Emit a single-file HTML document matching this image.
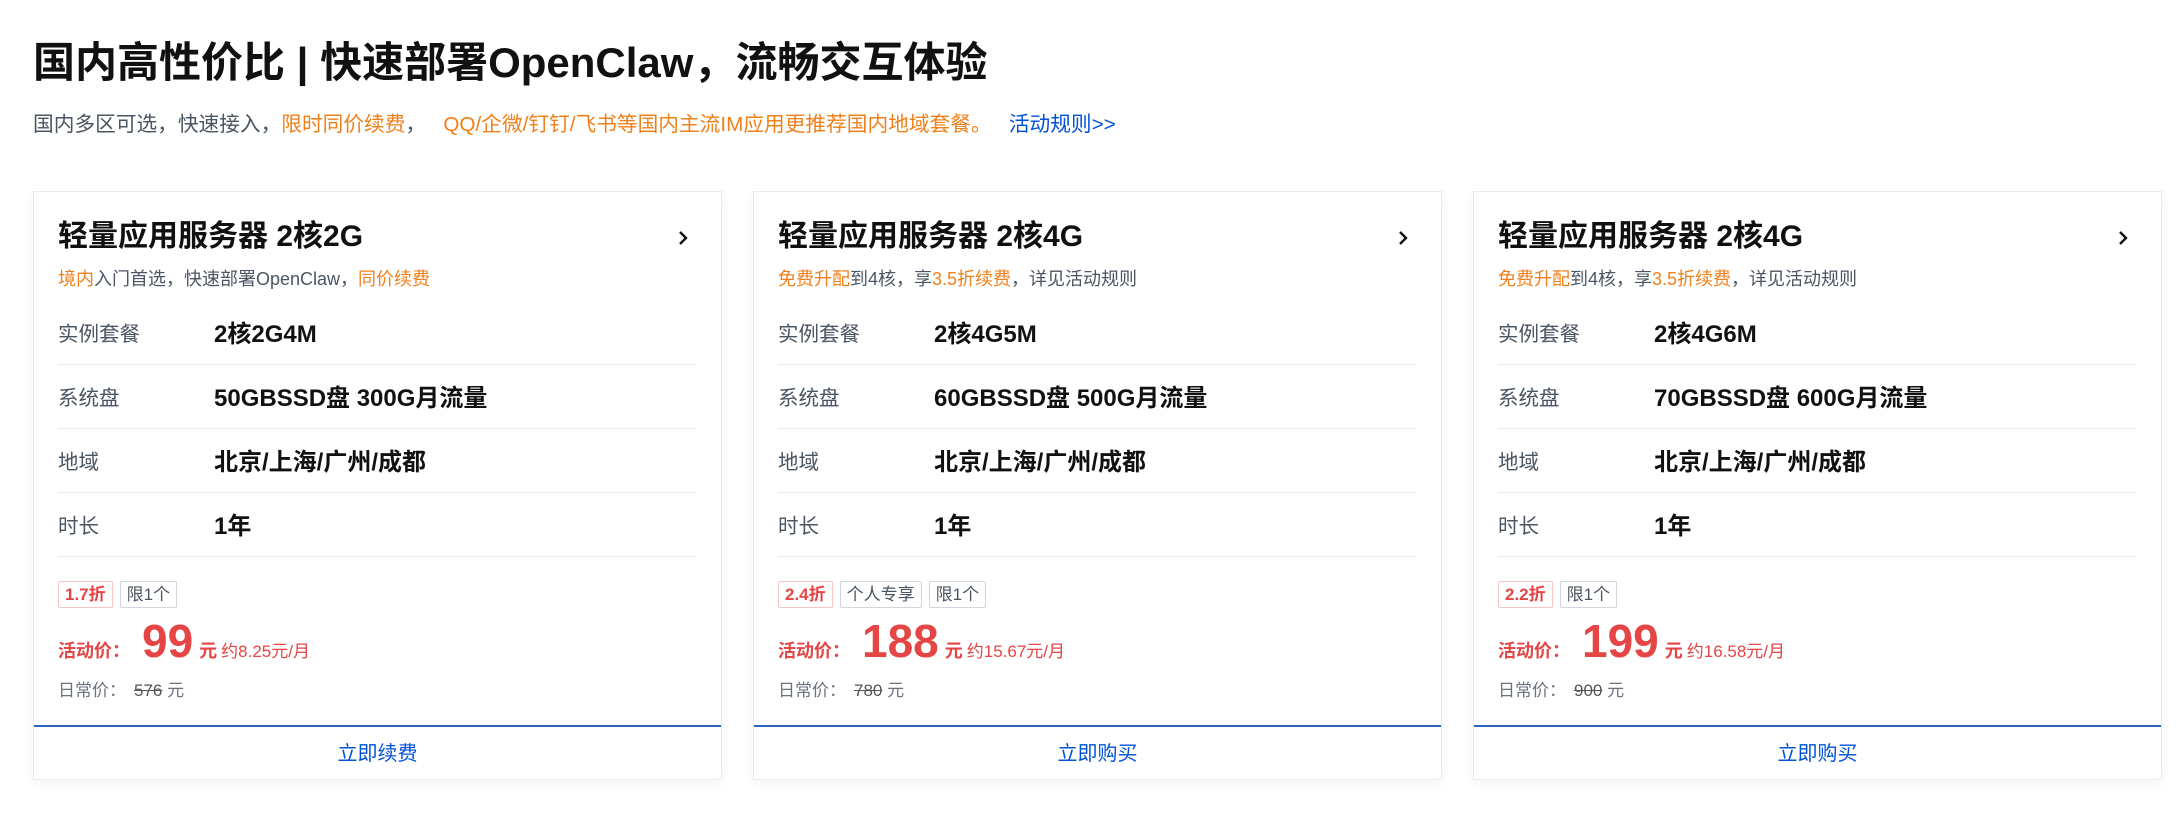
<!DOCTYPE html>
<html><head><meta charset="utf-8"><style>
*{margin:0;padding:0;box-sizing:border-box}
body{width:2181px;height:822px;background:#fff;font-family:"Liberation Sans","Noto Sans CJK SC",sans-serif;position:relative;overflow:hidden;color:#000}
h1{position:absolute;left:33px;top:38px;font-size:42px;font-weight:700;color:#111;white-space:nowrap;line-height:50px}
.sub{position:absolute;left:33px;top:112px;font-size:20.7px;color:#4b5563;white-space:nowrap;line-height:26px}
.o{color:#f0801a}.b{color:#0052d9}
.card{position:absolute;top:191px;width:689px;height:589px;border:1px solid #e8ecf2;box-shadow:0 4px 12px rgba(0,40,100,.05);background:#fff}
.t{position:absolute;left:24px;top:25px;font-size:30px;font-weight:700;line-height:40px;white-space:nowrap;color:#111}
.arr{position:absolute;right:28px;top:36px;width:20px;height:20px}
.d{position:absolute;left:24px;top:75px;font-size:18px;color:#4b5563;white-space:nowrap;line-height:24px}
.row{position:absolute;left:24px;right:24px;height:64px;border-bottom:1px solid #e8ebf0}
.row .l{position:absolute;left:0;top:20px;font-size:20.5px;color:#4b5563;line-height:28px}
.row .v{position:absolute;left:156px;top:19px;font-size:24px;font-weight:700;color:#111;line-height:30px;white-space:nowrap}
.tags{position:absolute;left:24px;top:389px;display:flex;gap:7px}
.tag{height:27px;padding:0 6px;border:1px solid #cfd6e0;border-radius:2px;font-size:17px;color:#4b5563;line-height:25px}
.tag.r{border-color:#f4c6c6;color:#e54545;font-weight:700}
.pr{position:absolute;left:24px;top:424px;white-space:nowrap;color:#e54545;height:50px}
.pr .a{font-size:18px;font-weight:700;vertical-align:baseline}
.pr .n{font-size:46px;font-weight:700;margin-left:12px;vertical-align:baseline;line-height:50px}
.pr .y{font-size:18px;font-weight:700;margin-left:6px}
.pr .m{font-size:17px;margin-left:4px}
.op{position:absolute;left:24px;top:484px;font-size:17px;color:#6b7280;white-space:nowrap}
.op s{margin-left:8px;color:#555}
.btn{position:absolute;left:0;right:0;bottom:0;height:54px;border-top:2px solid #2c64b8;text-align:center;line-height:54px;font-size:20px;color:#0052d9}
</style></head><body>
<h1>国内高性价比 | 快速部署OpenClaw，流畅交互体验</h1>
<div class="sub">国内多区可选，快速接入，<span class="o">限时同价续费</span>，&nbsp;&nbsp;&nbsp;<span class="o">QQ/企微/钉钉/飞书等国内主流IM应用更推荐国内地域套餐。</span>&nbsp;&nbsp;&nbsp;<span class="b">活动规则&gt;&gt;</span></div>

<div class="card" style="left:33px">
<div class="t">轻量应用服务器 2核2G</div>
<svg class="arr" viewBox="0 0 20 20"><path d="M7 4l6 6-6 6" fill="none" stroke="#111" stroke-width="2.4"/></svg>
<div class="d"><span class="o">境内</span>入门首选，快速部署OpenClaw，<span class="o">同价续费</span></div>
<div class="row" style="top:109px"><span class="l">实例套餐</span><span class="v">2核2G4M</span></div>
<div class="row" style="top:173px"><span class="l">系统盘</span><span class="v">50GBSSD盘 300G月流量</span></div>
<div class="row" style="top:237px"><span class="l">地域</span><span class="v">北京/上海/广州/成都</span></div>
<div class="row" style="top:301px"><span class="l">时长</span><span class="v">1年</span></div>
<div class="tags"><span class="tag r">1.7折</span><span class="tag">限1个</span></div>
<div class="pr"><span class="a">活动价：</span><span class="n">99</span><span class="y">元</span><span class="m">约8.25元/月</span></div>
<div class="op">日常价：<s>576</s> 元</div>
<div class="btn">立即续费</div>
</div>

<div class="card" style="left:753px">
<div class="t">轻量应用服务器 2核4G</div>
<svg class="arr" viewBox="0 0 20 20"><path d="M7 4l6 6-6 6" fill="none" stroke="#111" stroke-width="2.4"/></svg>
<div class="d"><span class="o">免费升配</span>到4核，享<span class="o">3.5折续费</span>，详见活动规则</div>
<div class="row" style="top:109px"><span class="l">实例套餐</span><span class="v">2核4G5M</span></div>
<div class="row" style="top:173px"><span class="l">系统盘</span><span class="v">60GBSSD盘 500G月流量</span></div>
<div class="row" style="top:237px"><span class="l">地域</span><span class="v">北京/上海/广州/成都</span></div>
<div class="row" style="top:301px"><span class="l">时长</span><span class="v">1年</span></div>
<div class="tags"><span class="tag r">2.4折</span><span class="tag">个人专享</span><span class="tag">限1个</span></div>
<div class="pr"><span class="a">活动价：</span><span class="n">188</span><span class="y">元</span><span class="m">约15.67元/月</span></div>
<div class="op">日常价：<s>780</s> 元</div>
<div class="btn">立即购买</div>
</div>

<div class="card" style="left:1473px">
<div class="t">轻量应用服务器 2核4G</div>
<svg class="arr" viewBox="0 0 20 20"><path d="M7 4l6 6-6 6" fill="none" stroke="#111" stroke-width="2.4"/></svg>
<div class="d"><span class="o">免费升配</span>到4核，享<span class="o">3.5折续费</span>，详见活动规则</div>
<div class="row" style="top:109px"><span class="l">实例套餐</span><span class="v">2核4G6M</span></div>
<div class="row" style="top:173px"><span class="l">系统盘</span><span class="v">70GBSSD盘 600G月流量</span></div>
<div class="row" style="top:237px"><span class="l">地域</span><span class="v">北京/上海/广州/成都</span></div>
<div class="row" style="top:301px"><span class="l">时长</span><span class="v">1年</span></div>
<div class="tags"><span class="tag r">2.2折</span><span class="tag">限1个</span></div>
<div class="pr"><span class="a">活动价：</span><span class="n">199</span><span class="y">元</span><span class="m">约16.58元/月</span></div>
<div class="op">日常价：<s>900</s> 元</div>
<div class="btn">立即购买</div>
</div>
</body></html>
